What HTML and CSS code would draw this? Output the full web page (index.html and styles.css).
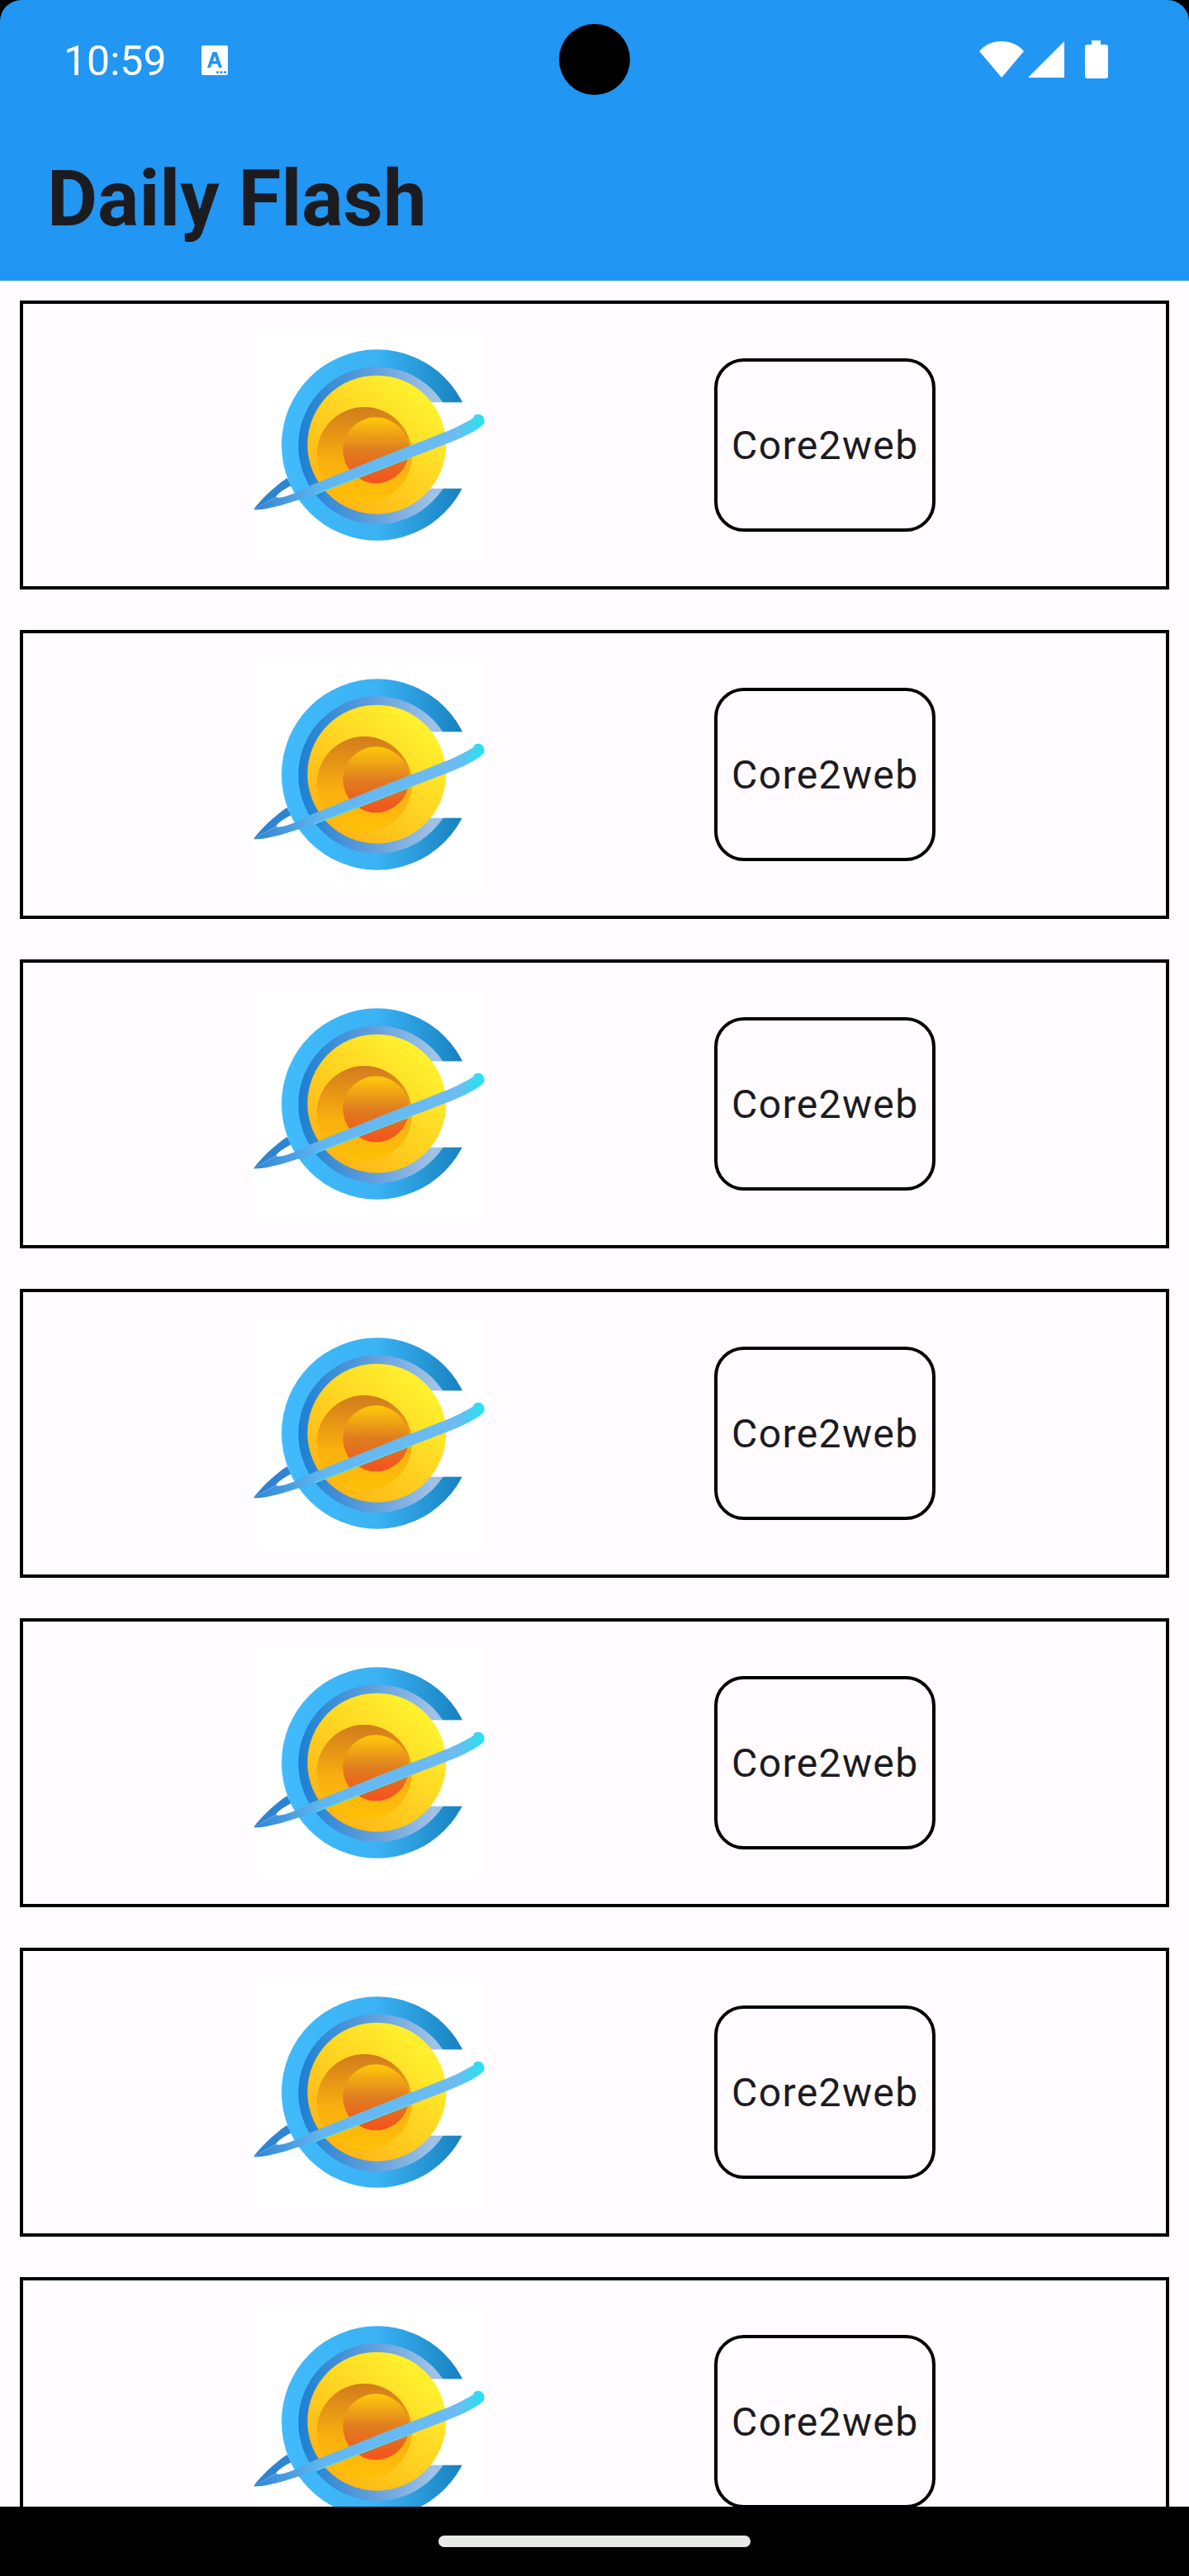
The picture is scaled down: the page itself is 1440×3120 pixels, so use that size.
FILE: index.html
```html
<!DOCTYPE html>
<html lang="en">
<head>
  <meta charset="UTF-8" />
  <meta name="viewport" content="width=device-width, initial-scale=1.0"/>
  <title>Daily Flash</title>
  <link rel="stylesheet" href="styles.css">
</head>
<body>

  <svg class="defs" width="0" height="0">
    <defs>
      <linearGradient id="outerGrad" x1="0" x2="1" y1="0" y2="0">
        <stop offset="0" stop-color="#41bbfb"/>
        <stop offset="0.5" stop-color="#3ab2f4"/>
        <stop offset="0.92" stop-color="#1a84c2"/>
      </linearGradient>
      <linearGradient id="midGrad" x1="0" x2="1" y1="0" y2="0">
        <stop offset="0" stop-color="#1c7fd2"/>
        <stop offset="0.45" stop-color="#5d9ddc"/>
        <stop offset="0.85" stop-color="#9fc2e6"/>
      </linearGradient>
      <linearGradient id="sunGrad" x1="0.15" x2="0.8" y1="0.9" y2="0.15">
        <stop offset="0" stop-color="#ffb314"/>
        <stop offset="1" stop-color="#fff02e"/>
      </linearGradient>
      <linearGradient id="dishGrad" x1="0" x2="0" y1="0" y2="1">
        <stop offset="0" stop-color="#d27b1c"/>
        <stop offset="0.55" stop-color="#f9ae0f"/>
        <stop offset="1" stop-color="#ffc107"/>
      </linearGradient>
      <linearGradient id="coreGrad" x1="0" x2="0" y1="0" y2="1">
        <stop offset="0" stop-color="#ffca0a"/>
        <stop offset="0.5" stop-color="#df7d20"/>
        <stop offset="1" stop-color="#f4511e"/>
      </linearGradient>
      <linearGradient id="ringGrad" gradientUnits="userSpaceOnUse" x1="0" x2="840" y1="0" y2="0">
        <stop offset="0" stop-color="#2f84d2"/>
        <stop offset="0.3" stop-color="#62b6f0"/>
        <stop offset="0.88" stop-color="#6cbcf2"/>
        <stop offset="1" stop-color="#22e4f2"/>
      </linearGradient>
      <symbol id="logo" viewBox="0 0 840 840">
        <rect width="840" height="840" fill="#fff"/>
        <path d="M0 652C22 620 72 570 122 537L137 565C107 580 87 595 82 605Z" fill="#2f84d2"/>
        <circle cx="449" cy="417" r="347" fill="url(#outerGrad)"/>
        <circle cx="449" cy="419" r="286" fill="url(#midGrad)"/>
        <rect x="590" y="262" width="250" height="313" fill="#fff"/>
        <circle cx="448" cy="416" r="252" fill="url(#sunGrad)"/>
        <circle cx="403" cy="452" r="173" fill="url(#dishGrad)"/>
        <circle cx="445" cy="436" r="120" fill="url(#coreGrad)"/>
        <path d="M0 652L82 606C100 615 152 593 212 562L572 418C662 384 748 352 800 318C798 311 806 305 820 305C836 308 842 325 837 340C800 378 712 410 572 462L222 597C142 624 52 655 0 652Z" fill="url(#ringGrad)"/>
        <path d="M222 597L572 462" fill="none" stroke="#4be6f2" stroke-width="4"/>
      </symbol>
    </defs>
  </svg>

  <div class="camera"></div>

  <header class="app-bar">
    <div class="status-bar">
      <div class="status-left">
        <span class="time">10:59</span>
        <svg class="a-icon" viewBox="0 0 32 36">
          <path fill="#fff" fill-rule="evenodd" d="M2 0H30A2 2 0 0 1 32 2V34A2 2 0 0 1 30 36H2A2 2 0 0 1 0 34V2A2 2 0 0 1 2 0ZM13.500 8L7 27H11L12.500 22.500H19.500L21 27H25L18.500 8ZM14 19L16 13L18 19Z"/>
          <circle cx="19.500" cy="32.500" r="1.600" fill="#2196f3"/>
          <circle cx="24" cy="32.500" r="1.600" fill="#2196f3"/>
          <circle cx="28.500" cy="32.500" r="1.600" fill="#2196f3"/>
        </svg>
      </div>
      <div class="status-right">
        <svg class="wifi" viewBox="0 0 54 44"><path fill="#fff" d="M0 12C7 4 16 0 27 0C38 0 47 4 54 12L27 44Z"/></svg>
        <svg class="signal" viewBox="0 0 44 44"><path fill="#fff" d="M44 0V44H0Z"/></svg>
        <svg class="battery" viewBox="0 0 28 46"><path fill="#fff" d="M8 0H19V5H25A3 3 0 0 1 28 8V43A3 3 0 0 1 25 46H3A3 3 0 0 1 0 43V8A3 3 0 0 1 3 5H8Z"/></svg>
      </div>
    </div>
    <h1 class="title">Daily Flash</h1>
  </header>

  <main class="list">
    <div class="card">
      <svg class="logo"><use href="#logo"/></svg>
      <div class="tag">Core2web</div>
    </div>
    <div class="card">
      <svg class="logo"><use href="#logo"/></svg>
      <div class="tag">Core2web</div>
    </div>
    <div class="card">
      <svg class="logo"><use href="#logo"/></svg>
      <div class="tag">Core2web</div>
    </div>
    <div class="card">
      <svg class="logo"><use href="#logo"/></svg>
      <div class="tag">Core2web</div>
    </div>
    <div class="card">
      <svg class="logo"><use href="#logo"/></svg>
      <div class="tag">Core2web</div>
    </div>
    <div class="card">
      <svg class="logo"><use href="#logo"/></svg>
      <div class="tag">Core2web</div>
    </div>
    <div class="card">
      <svg class="logo"><use href="#logo"/></svg>
      <div class="tag">Core2web</div>
    </div>
  </main>

  <footer class="nav-bar">
    <div class="nav-pill"></div>
  </footer>

</body>
</html>
```

FILE: styles.css
```css
:root {
  --blue: #2196f3;
  --page: #fffbfe;
  --ink: #1c1b1f;
}

* {
  box-sizing: border-box;
}

body {
  margin: 0;
  height: 3120px;
  overflow: hidden;
  display: flex;
  flex-direction: column;
  position: relative;
  background: var(--page);
  color: var(--ink);
  font-family: Roboto, sans-serif;
}

.defs {
  position: absolute;
}

.camera {
  position: absolute;
  top: 29px;
  left: 677px;
  width: 86px;
  height: 86px;
  border-radius: 50%;
  background: #000;
  z-index: 2;
}

.app-bar {
  flex: none;
  height: 340px;
  background: #000;
  position: relative;
}

/* blue layer so the screen corners show black behind it */
.app-bar::before {
  content: '';
  position: absolute;
  inset: 0;
  background: var(--blue);
  border-radius: 26px 26px 0 0;
}

.status-bar {
  position: relative;
  height: 144px;
  display: flex;
  align-items: center;
  justify-content: space-between;
  padding: 0 98px 0 77px;
}

.status-left {
  display: flex;
  align-items: center;
  gap: 42px;
}

.time {
  margin-top: 4px;
  color: #fff;
  font-size: 50px;
  line-height: 56px;
}

.a-icon {
  width: 32px;
  height: 36px;
  margin-top: 1px;
}

.status-right {
  display: flex;
  align-items: center;
}

.wifi {
  width: 54px;
  height: 44px;
}

.signal {
  width: 44px;
  height: 44px;
  margin-left: 5px;
}

.battery {
  width: 28px;
  height: 46px;
  margin-left: 25px;
}

.title {
  position: relative;
  margin: 42px 0 0;
  padding-left: 57px;
  font-size: 94px;
  line-height: 110px;
  font-weight: 700;
  color: var(--ink);
}

.list {
  flex: 1;
  min-height: 0;
  overflow: hidden;
  padding: 24px 24px 0;
  display: flex;
  flex-direction: column;
  gap: 49px;
}

.card {
  flex: none;
  height: 350px;
  border: 4px solid #000;
  display: flex;
  align-items: center;
  justify-content: space-evenly;
}

.logo {
  width: 280px;
  height: 280px;
  margin-top: 2px;
  filter: blur(0.6px);
}

.tag {
  width: 268px;
  height: 210px;
  border: 4px solid #000;
  border-radius: 36px;
  display: flex;
  align-items: center;
  justify-content: center;
  font-size: 48px;
  letter-spacing: 1.4px;
}

.nav-bar {
  flex: none;
  height: 84px;
  background: #000;
  display: flex;
  justify-content: center;
  padding-top: 35px;
}

.nav-pill {
  width: 378px;
  height: 14px;
  border-radius: 7px;
  background: #e8eae8;
}
```
